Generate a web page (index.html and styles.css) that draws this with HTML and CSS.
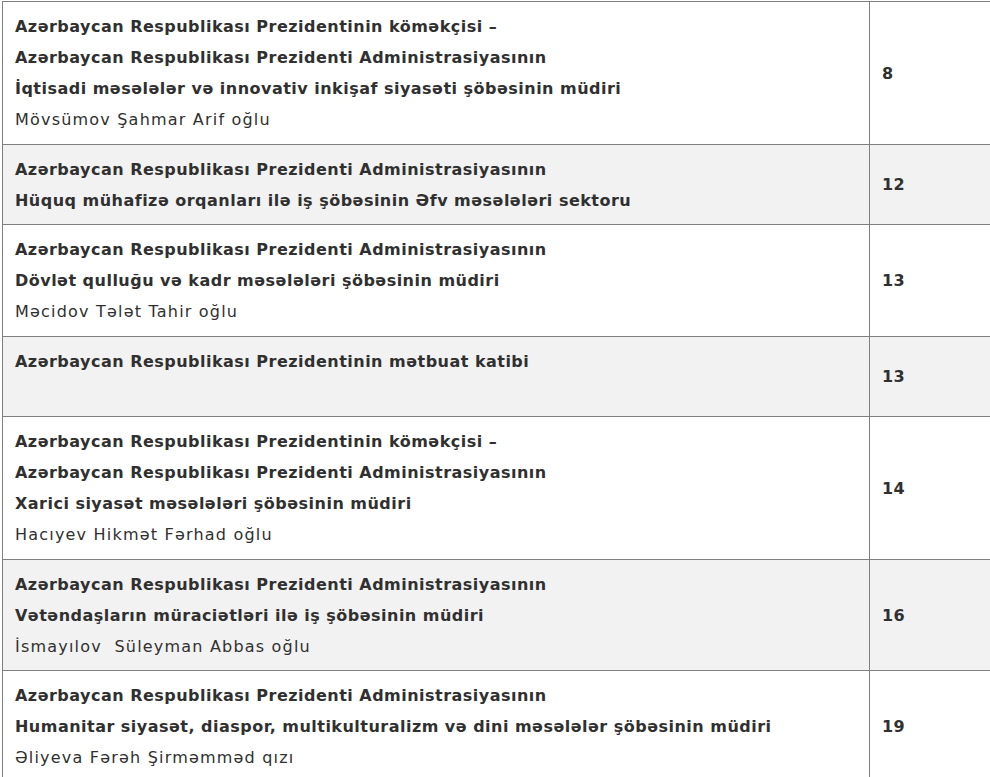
FILE: index.html
```html
<!DOCTYPE html>
<html lang="az">
<head>
<meta charset="utf-8">
<link rel="stylesheet" href="styles.css">
</head>
<body>
<table class="list">
  <colgroup><col class="c-title"><col class="c-num"></colgroup>
  <tbody>
    <tr>
      <td class="title">
        <strong>Azərbaycan Respublikası Prezidentinin köməkçisi –<br>Azərbaycan Respublikası Prezidenti Administrasiyasının<br>İqtisadi məsələlər və innovativ inkişaf siyasəti şöbəsinin müdiri</strong><br>
        <span class="name">Mövsümov Şahmar Arif oğlu</span>
      </td>
      <td class="num">8</td>
    </tr>
    <tr class="alt">
      <td class="title">
        <strong>Azərbaycan Respublikası Prezidenti Administrasiyasının<br>Hüquq mühafizə orqanları ilə iş şöbəsinin Əfv məsələləri sektoru</strong>
      </td>
      <td class="num">12</td>
    </tr>
    <tr>
      <td class="title">
        <strong>Azərbaycan Respublikası Prezidenti Administrasiyasının<br>Dövlət qulluğu və kadr məsələləri şöbəsinin müdiri</strong><br>
        <span class="name">Məcidov Tələt Tahir oğlu</span>
      </td>
      <td class="num">13</td>
    </tr>
    <tr class="alt">
      <td class="title">
        <strong>Azərbaycan Respublikası Prezidentinin mətbuat katibi</strong><br>&nbsp;
      </td>
      <td class="num">13</td>
    </tr>
    <tr>
      <td class="title">
        <strong>Azərbaycan Respublikası Prezidentinin köməkçisi –<br>Azərbaycan Respublikası Prezidenti Administrasiyasının<br>Xarici siyasət məsələləri şöbəsinin müdiri</strong><br>
        <span class="name">Hacıyev Hikmət Fərhad oğlu</span>
      </td>
      <td class="num">14</td>
    </tr>
    <tr class="alt">
      <td class="title">
        <strong>Azərbaycan Respublikası Prezidenti Administrasiyasının<br>Vətəndaşların müraciətləri ilə iş şöbəsinin müdiri</strong><br>
        <span class="name">İsmayılov&nbsp; Süleyman Abbas oğlu</span>
      </td>
      <td class="num">16</td>
    </tr>
    <tr>
      <td class="title">
        <strong>Azərbaycan Respublikası Prezidenti Administrasiyasının<br>Humanitar siyasət, diaspor, multikulturalizm və dini məsələlər şöbəsinin müdiri</strong><br>
        <span class="name">Əliyeva Fərəh Şirməmməd qızı</span>
      </td>
      <td class="num">19</td>
    </tr>
  </tbody>
</table>
</body>
</html>
```
FILE: styles.css
```css
html, body {
  margin: 0;
  padding: 0;
  background: #ffffff;
}
body {
  padding: 1px 0 0 2px;
  font-family: "DejaVu Sans", "Noto Sans", sans-serif;
  font-size: 16px;
  color: #303030;
}
.list {
  border-collapse: collapse;
  width: 988px;
  table-layout: fixed;
}
.c-title { width: 867px; }
.c-num { width: 121px; }
.list td {
  border: 1px solid #808080;
  padding: 9px 12px 8.5px 12px;
  line-height: 31px;
}
.list tr.alt td {
  background: #f2f2f2;
}
.title {
  vertical-align: top;
}
.title strong {
  font-weight: 700;
  letter-spacing: 0.48px;
}
.name {
  font-weight: 400;
  letter-spacing: 1.2px;
}
.num {
  vertical-align: middle;
  font-weight: 700;
  letter-spacing: 0.48px;
}
```
